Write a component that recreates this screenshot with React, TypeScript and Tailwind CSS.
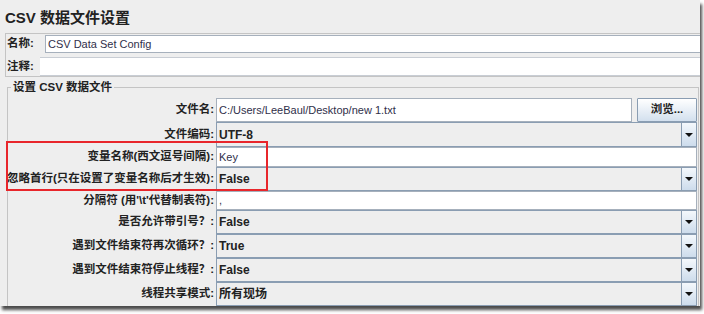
import React from 'react';

type Row = {
  label: string;
  kind: 'file' | 'combo' | 'text';
  value: string;
  h: string;
};

const rows: Row[] = [
  { label: '文件名:', kind: 'file', value: 'C:/Users/LeeBaul/Desktop/new 1.txt', h: 'h-[24px]' },
  { label: '文件编码:', kind: 'combo', value: 'UTF-8', h: 'h-[25px]' },
  { label: '变量名称(西文逗号间隔):', kind: 'text', value: 'Key', h: 'h-[20px]' },
  { label: '忽略首行(只在设置了变量名称后才生效):', kind: 'combo', value: 'False', h: 'h-[24px]' },
  { label: "分隔符 (用'\\t'代替制表符):", kind: 'text', value: ',', h: 'h-[19px]' },
  { label: '是否允许带引号？:', kind: 'combo', value: 'False', h: 'h-[24px]' },
  { label: '遇到文件结束符再次循环？:', kind: 'combo', value: 'True', h: 'h-[24px]' },
  { label: '遇到文件结束符停止线程？:', kind: 'combo', value: 'False', h: 'h-[24px]' },
  { label: '线程共享模式:', kind: 'combo', value: '所有现场', h: 'h-[24px]' },
];

function Combo({ value }: { value: string }) {
  return (
    <div className="flex h-full flex-1 border border-[#8a9db2] bg-[#eeeeee]">
      <div className="flex flex-1 items-center px-[2px] text-[12px] font-bold text-[#222]">{value}</div>
      <div className="flex w-[15px] items-center justify-center border-l border-[#8a9db2] bg-gradient-to-b from-[#f4f8fc] to-[#cddcec]">
        <div className="h-0 w-0 border-x-[4px] border-t-[4px] border-x-transparent border-t-[#111]" />
      </div>
    </div>
  );
}

function TextBox({ value }: { value: string }) {
  return (
    <div className="flex h-full flex-1 items-center border border-[#a6b0bc] bg-white px-[2px] text-[11px] text-[#30304a]">
      {value}
    </div>
  );
}

export default function App() {
  return (
    <div className="h-[314px] w-[704px] bg-white font-['Liberation_Sans','Noto_Sans_CJK_SC',sans-serif]">
      <div className="relative h-[306px] w-[700px] overflow-hidden bg-[#eeeeee] shadow-[2px_4px_3px_rgba(0,0,0,0.7)]">
        {/* Title */}
        <div className="h-[33px] pl-[5px] pt-[9px] text-[15px] font-bold leading-[18px] text-[#222]">
          CSV 数据文件设置
        </div>

        {/* Name / comment panel */}
        <div className="ml-[5px] border border-r-0 border-[#c4c4c4] pt-[1px]">
          <div className="flex h-[18px] items-center">
            <span className="w-[39px] pl-[1px] text-[11.5px] font-bold text-[#222]">名称:</span>
            <div className="flex h-full flex-1 items-center border border-r-0 border-[#a6b0bc] bg-white px-[2px] text-[11px] text-[#30304a]">
              CSV Data Set Config
            </div>
          </div>
          <div className="mt-[4px] flex h-[19px] items-center">
            <span className="w-[34px] pl-[1px] text-[11.5px] font-bold text-[#222]">注释:</span>
            <div className="h-full flex-1 border-y border-[#c8cdd4] bg-white" />
          </div>
        </div>

        {/* CSV file group */}
        <fieldset className="ml-[7px] mr-[1px] mt-[3px] border border-[#c4c4c4] pt-[4px]">
          <legend className="ml-[3px] px-[2px] text-[11.5px] font-bold leading-[14px] text-[#222]">
            设置 CSV 数据文件
          </legend>
          <div className="grid grid-cols-[206px_1fr] gap-x-[2px] pr-[1px]">
            {rows.map((r) => (
              <React.Fragment key={r.label}>
                <div className={`${r.h} flex items-center justify-end whitespace-nowrap text-[11.5px] font-bold text-[#222]`}>
                  {r.label}
                </div>
                <div className={`${r.h} flex`}>
                  {r.kind === 'combo' && <Combo value={r.value} />}
                  {r.kind === 'text' && <TextBox value={r.value} />}
                  {r.kind === 'file' && (
                    <div className="flex h-full flex-1 gap-[5px]">
                      <TextBox value={r.value} />
                      <button className="w-[60px] rounded-[1px] border border-[#8a9db2] bg-gradient-to-b from-white to-[#d3e0ee] text-[11.5px] font-bold text-[#222]">
                        浏览...
                      </button>
                    </div>
                  )}
                </div>
              </React.Fragment>
            ))}
          </div>
        </fieldset>

        {/* annotation */}
        <div className="absolute left-[6px] top-[141px] h-[50px] w-[262px] border-2 border-[#e8262b]" />
      </div>
    </div>
  );
}
